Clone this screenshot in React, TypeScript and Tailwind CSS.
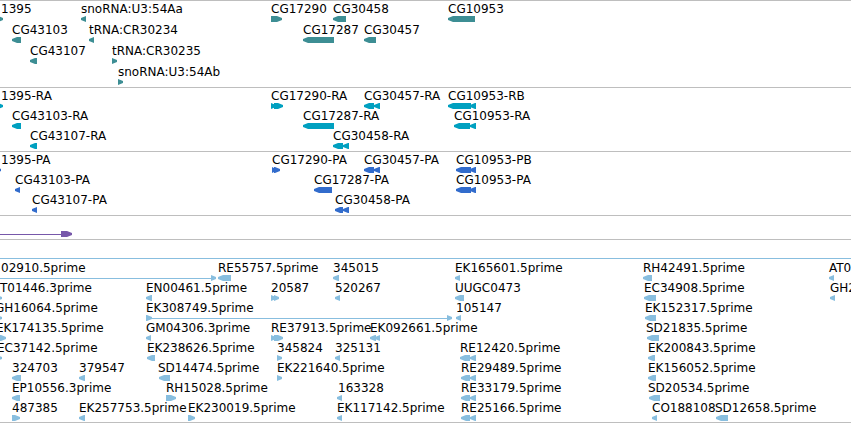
import React from 'react';

type Part = [number, number, ('l' | 'r' | 'line')?];

interface Feature {
  x: number;
  label?: string;
  parts: Part[];
}

interface Track {
  name: string;
  color: string;
  rowClass: string;
  padClass: string;
  rows: Feature[][];
}

const f = (x: number, label: string, ...parts: Part[]): Feature => ({ x, label, parts });

const tracks: Track[] = [
  {
    name: 'Genes',
    color: 'text-[#3d8e94]',
    rowClass: 'h-[21px]',
    padClass: 'pb-0.5',
    rows: [
      [
        f(1, '1395', [-6, 3, 'r']),
        f(81, 'snoRNA:U3:54Aa', [81, 86, 'l']),
        f(271, 'CG17290', [271, 282, 'r']),
        f(333, 'CG30458', [333, 346, 'l']),
        f(448, 'CG10953', [448, 475, 'l']),
      ],
      [
        f(12, 'CG43103', [12, 21, 'l']),
        f(89, 'tRNA:CR30234', [89, 94, 'l']),
        f(303, 'CG17287', [303, 334, 'l']),
        f(364, 'CG30457', [364, 376, 'l']),
      ],
      [f(30, 'CG43107', [30, 37, 'l']), f(112, 'tRNA:CR30235', [112, 117, 'r'])],
      [f(118, 'snoRNA:U3:54Ab', [118, 123, 'r'])],
    ],
  },
  {
    name: 'Transcripts',
    color: 'text-[#00a0c0]',
    rowClass: 'h-5',
    padClass: 'pb-[3px]',
    rows: [
      [
        f(1, '1395-RA', [-4, 3, 'r']),
        f(271, 'CG17290-RA', [271, 276, 'r'], [274, 283, 'r']),
        f(364, 'CG30457-RA', [364, 374, 'l'], [374, 380, 'l']),
        f(448, 'CG10953-RB', [448, 471, 'l'], [470, 476, 'l']),
      ],
      [
        f(12, 'CG43103-RA', [12, 21, 'l']),
        f(303, 'CG17287-RA', [303, 334, 'l']),
        f(454, 'CG10953-RA', [454, 470, 'l'], [470, 476, 'l']),
      ],
      [
        f(30, 'CG43107-RA', [30, 37, 'l']),
        f(333, 'CG30458-RA', [333, 343, 'l'], [343, 349, 'l']),
      ],
    ],
  },
  {
    name: 'Proteins',
    color: 'text-[#326ccc]',
    rowClass: 'h-5',
    padClass: 'pb-[3px]',
    rows: [
      [
        f(1, '1395-PA', [-5, 1, 'r']),
        f(272, 'CG17290-PA', [272, 276, 'r'], [274, 280, 'r']),
        f(364, 'CG30457-PA', [364, 374, 'l'], [374, 380, 'l']),
        f(456, 'CG10953-PB', [456, 471, 'l'], [470, 476, 'l']),
      ],
      [
        f(15, 'CG43103-PA', [15, 20, 'l']),
        f(314, 'CG17287-PA', [314, 332, 'l']),
        f(456, 'CG10953-PA', [456, 471, 'l'], [470, 476, 'l']),
      ],
      [
        f(32, 'CG43107-PA', [32, 37, 'l']),
        f(335, 'CG30458-PA', [335, 343, 'l'], [343, 349, 'l']),
      ],
    ],
  },
  {
    name: 'Non-coding',
    color: 'text-[#7758aa]',
    rowClass: 'h-5',
    padClass: 'pb-[3px]',
    rows: [[{ x: 0, parts: [[0, 61, 'line'], [61, 72, 'r']] }]],
  },
  {
    name: 'ESTs',
    color: 'text-[#88bedf]',
    rowClass: 'h-5',
    padClass: 'pb-0.5',
    rows: [
      [{ x: 0, parts: [[0, 4000, 'line']] }],
      [
        f(1, '02910.5prime', [0, 212, 'line'], [211, 216, 'r']),
        f(218, 'RE55757.5prime', [218, 231, 'l']),
        f(333, '345015', [333, 339, 'l']),
        f(455, 'EK165601.5prime', [455, 460, 'l']),
        f(643, 'RH42491.5prime', [643, 652, 'l']),
        f(829, 'AT01446', [829, 834, 'l']),
      ],
      [
        f(0, 'T01446.3prime', [-4, 2, 'r']),
        f(146, 'EN00461.5prime', [146, 152, 'l']),
        f(271, '20587', [271, 276, 'r'], [274, 279, 'r']),
        f(335, '520267', [335, 340, 'l']),
        f(455, 'UUGC0473', [455, 464, 'l']),
        f(644, 'EC34908.5prime', [644, 656, 'l']),
        f(830, 'GH22170', [830, 835, 'l']),
      ],
      [
        f(-5, 'GH16064.5prime', [-4, 2, 'r']),
        f(146, 'EK308749.5prime', [146, 152, 'r'], [151, 448, 'line'], [447, 452, 'r']),
        f(456, '105147', [456, 461, 'l']),
        f(645, 'EK152317.5prime', [645, 656, 'l']),
      ],
      [
        f(-4, 'EK174135.5prime', [-3, 6, 'r']),
        f(146, 'GM04306.3prime', [146, 151, 'l']),
        f(271, 'RE37913.5prime', [271, 276, 'r'], [274, 283, 'r']),
        f(370, 'EK092661.5prime', [370, 376, 'l'], [375, 380, 'l']),
        f(646, 'SD21835.5prime', [647, 659, 'l']),
      ],
      [
        f(-3, 'EC37142.5prime', [-4, 2, 'r']),
        f(147, 'EK238626.5prime', [147, 155, 'l']),
        f(277, '345824', [277, 282, 'r']),
        f(335, '325131', [335, 340, 'l']),
        f(460, 'RE12420.5prime', [460, 470, 'l'], [470, 476, 'l']),
        f(648, 'EK200843.5prime', [648, 655, 'l']),
      ],
      [
        f(12, '324703', [12, 21, 'l']),
        f(79, '379547', [79, 85, 'l']),
        f(158, 'SD14474.5prime', [159, 170, 'l']),
        f(277, 'EK221640.5prime', [277, 282, 'r']),
        f(461, 'RE29489.5prime', [461, 470, 'l'], [470, 476, 'l']),
        f(648, 'EK156052.5prime', [648, 656, 'l']),
      ],
      [
        f(12, 'EP10556.3prime', [12, 20, 'l']),
        f(166, 'RH15028.5prime', [166, 176, 'r']),
        f(338, '163328', [337, 342, 'l']),
        f(461, 'RE33179.5prime', [461, 470, 'l'], [470, 476, 'l']),
        f(648, 'SD20534.5prime', [649, 660, 'l']),
      ],
      [
        f(12, '487385', [12, 20, 'r']),
        f(79, 'EK257753.5prime', [79, 85, 'l']),
        f(188, 'EK230019.5prime', [188, 195, 'r']),
        f(337, 'EK117142.5prime', [337, 342, 'l']),
        f(461, 'RE25166.5prime', [461, 470, 'l'], [470, 476, 'l']),
        f(652, 'CO188108', [652, 657, 'l']),
        f(715, 'SD12658.5prime', [716, 728, 'l']),
      ],
    ],
  },
];

// exon box with a pointed end; short ones are plain triangles
function partPath([a, b, dir]: Part, x: number) {
  const s = a - x;
  const e = b - x;
  if (dir === 'line') return `M${s} 3H${e}V4H${s}Z`;
  const head = Math.min(5, e - s);
  if (dir === 'l') {
    return `M${s} 2L${s + head} 0H${e}V6H${s + head}L${s} 4Z`;
  }
  return `M${e} 2L${e - head} 0H${s}V6H${e - head}L${e} 4Z`;
}

function FeatureGlyph({ feature, color }: { feature: Feature; color: string }) {
  return (
    <div className="absolute top-0" style={{ left: feature.x }}>
      <span className="block h-[15px] whitespace-nowrap leading-4">{feature.label}</span>
      <svg width="1" height="6" className={`block overflow-visible fill-current ${color}`} aria-hidden="true">
        {feature.parts.map((part, i) => (
          <path key={i} d={partPath(part, feature.x)} />
        ))}
      </svg>
    </div>
  );
}

export default function App() {
  return (
    <main className="w-full overflow-hidden border-b border-[#bebebe] bg-white font-['DejaVu_Sans',sans-serif] text-xs text-black">
      {tracks.map((track) => (
        <section
          key={track.name}
          aria-label={track.name}
          className={`border-t border-[#bebebe] ${track.padClass}`}
        >
          {track.rows.map((row, i) => (
            <div key={i} className={`relative ${track.rowClass}`}>
              {row.map((feature, j) => (
                <FeatureGlyph key={j} feature={feature} color={track.color} />
              ))}
            </div>
          ))}
        </section>
      ))}
    </main>
  );
}
